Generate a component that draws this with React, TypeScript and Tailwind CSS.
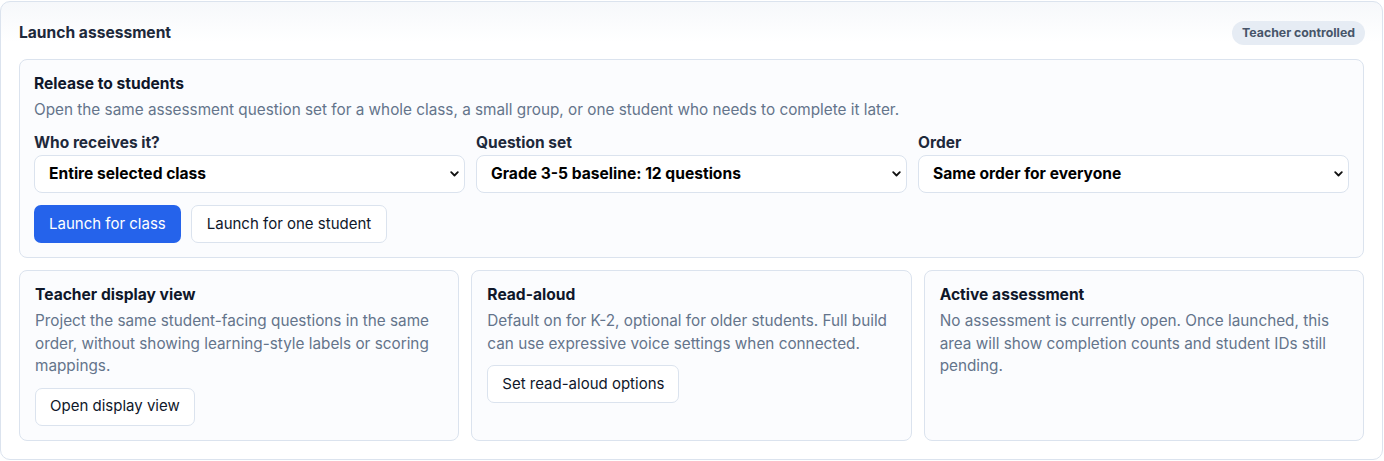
import React from "react";

function Chevron() {
  return (
    <svg width="9" height="6" viewBox="0 0 9 6" className="pointer-events-none absolute right-[6px] top-1/2 -translate-y-1/2">
      <path d="M1.2 1.2 L4.5 4.5 L7.8 1.2" fill="none" stroke="#111" strokeWidth="1.8" strokeLinecap="round" strokeLinejoin="round" />
    </svg>
  );
}

function Field({ label, value }: { label: string; value: string }) {
  return (
    <div className="flex flex-col">
      <div className="text-[15.5px] font-bold leading-[22px] text-[#1e293b] mb-[1px]">{label}</div>
      <div className="relative">
        <select
          defaultValue={value}
          className="w-full h-[38px] appearance-none rounded-[8px] border border-[#dbe3ee] bg-white pl-[14px] pr-8 text-[15.6px] font-bold text-black outline-none"
        >
          <option>{value}</option>
        </select>
        <Chevron />
      </div>
    </div>
  );
}

function Card({ title, desc, button }: { title: string; desc: string; button?: string }) {
  return (
    <div className="rounded-[8px] border border-[#dbe3ee] bg-[#fbfcfe] px-[15px] pt-[13px] pb-[14px] h-[171px]">
      <div className="text-[15.6px] font-bold leading-[22px] text-[#0f172a]">{title}</div>
      <div className="mt-[4px] text-[15.3px] leading-[22.5px] text-[#64748b]">{desc}</div>
      {button && (
        <button className="mt-[10px] h-[38px] rounded-[7px] border border-[#dbe3ee] bg-white px-[14px] text-[15px] text-[#0f172a]">
          {button}
        </button>
      )}
    </div>
  );
}

export default function App() {
  return (
    <div className="w-[1384px] h-[461px] bg-white pt-px" style={{ fontFamily: "Inter, 'Noto Sans', sans-serif" }}>
      <div className="w-[1383px] h-[459px] rounded-[10px] border border-[#dbe3ee] bg-gradient-to-b from-[#f6f8fb] to-white to-[40px] px-[18px] pt-[18px]">
        <div className="flex items-center justify-between h-[26px]">
          <div className="text-[15.6px] font-bold text-[#1e293b]">Launch assessment</div>
          <div className="mr-[-1px] rounded-full bg-[#e6ecf4] px-[10px] h-[24px] flex items-center text-[12.3px] font-bold text-[#475569]">
            Teacher controlled
          </div>
        </div>
        <div className="mt-[13px] rounded-[8px] border border-[#dbe3ee] bg-[#fbfcfe] px-[14px] pt-[13px] pb-[14px]">
          <div className="text-[15.6px] font-bold leading-[22px] text-[#0f172a]">Release to students</div>
          <div className="mt-[4px] text-[15.3px] leading-[22px] text-[#64748b]">
            Open the same assessment question set for a whole class, a small group, or one student who needs to complete it later.
          </div>
          <div className="mt-[11px] grid grid-cols-3 gap-[11px]">
            <Field label="Who receives it?" value="Entire selected class" />
            <Field label="Question set" value="Grade 3-5 baseline: 12 questions" />
            <Field label="Order" value="Same order for everyone" />
          </div>
          <div className="mt-[12px] flex gap-[10px]">
            <button className="h-[38px] rounded-[7px] bg-[#2563eb] px-[15px] text-[15px] text-white">Launch for class</button>
            <button className="h-[38px] rounded-[7px] border border-[#dbe3ee] bg-white px-[15px] text-[15px] text-[#0f172a]">
              Launch for one student
            </button>
          </div>
        </div>
        <div className="mt-[12px] grid grid-cols-3 gap-[12px]">
          <Card
            title="Teacher display view"
            desc="Project the same student-facing questions in the same order, without showing learning-style labels or scoring mappings."
            button="Open display view"
          />
          <Card
            title="Read-aloud"
            desc="Default on for K-2, optional for older students. Full build can use expressive voice settings when connected."
            button="Set read-aloud options"
          />
          <Card
            title="Active assessment"
            desc="No assessment is currently open. Once launched, this area will show completion counts and student IDs still pending."
          />
        </div>
      </div>
    </div>
  );
}
